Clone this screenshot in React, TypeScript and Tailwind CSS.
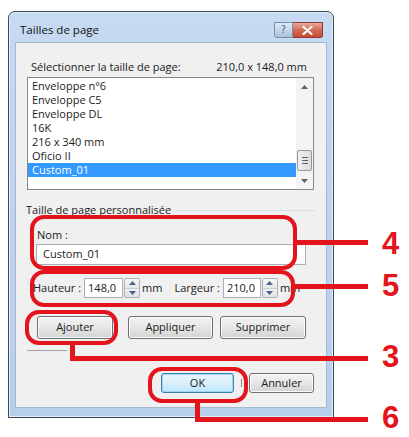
import React from "react";

function Spinner() {
  return (
    <div className="ml-[1px] flex h-[20px] w-[16px] flex-col overflow-hidden rounded-[2px] border border-[#a9b0b8] bg-[#eef0f2]">
      <div className="flex flex-1 items-center justify-center border-b border-[#c8cdd3] bg-gradient-to-b from-[#f7f8f9] to-[#e3e6ea]">
        <svg width="7" height="4" viewBox="0 0 7 4">
          <path d="M0 4 L3.5 0 L7 4Z" fill="#4e6285" />
        </svg>
      </div>
      <div className="flex flex-1 items-center justify-center bg-gradient-to-b from-[#f0f2f4] to-[#dde1e6]">
        <svg width="7" height="4" viewBox="0 0 7 4">
          <path d="M0 0 L3.5 4 L7 0Z" fill="#4e6285" />
        </svg>
      </div>
    </div>
  );
}

function WinButton({ label, w, isDefault }: { label: string; w: string; isDefault?: boolean }) {
  return (
    <div
      className={
        "flex items-center justify-center rounded-[3px] border " +
        (isDefault
          ? "border-[#3c7fb1] bg-gradient-to-b from-[#eaf6fd] via-[#d9f0fc] to-[#bee6fd] shadow-[inset_0_0_0_1px_#9ed8f6] "
          : "border-[#707070] bg-gradient-to-b from-[#f3f3f3] via-[#e6e6e6] to-[#d3d3d3] shadow-[inset_0_0_0_1px_#fcfcfc] ") +
        w
      }
    >
      <span>{label}</span>
    </div>
  );
}

const items = ["Enveloppe n°6", "Enveloppe C5", "Enveloppe DL", "16K", "216 x 340 mm", "Oficio II", "Custom_01"];

export default function App() {
  return (
    <div className="relative h-[437px] w-[409px] overflow-hidden bg-white font-['Open_Sans',sans-serif] text-[11px] text-[#1b1b1b]">
      {/* Window */}
      <div className="ml-[8px] mt-[11px] flex h-[407px] w-[326px] flex-col rounded-t-[7px] border border-[#39485a] bg-gradient-to-b from-[#c6daf1] via-[#bdd4ee] to-[#b6cfea] shadow-[inset_0_0_0_1px_#e2edf8]">
        {/* Title bar */}
        <div className="flex h-[30px] items-start">
          <div className="ml-[11px] mt-[11px] text-[11.5px] leading-[14px] text-[#111]">Tailles de page</div>
          <div className="ml-auto mr-[10px] mt-[10px] flex">
            <div className="flex h-[16px] w-[19px] items-center justify-center rounded-bl-[3px] border border-[#7b8ea8] bg-gradient-to-b from-[#dfe9f5] via-[#c5d6ea] to-[#a9c0db]">
              <span className="font-['DejaVu_Sans',sans-serif] text-[10px] leading-none text-[#5b6b80]">?</span>
            </div>
            <div className="flex h-[16px] w-[30px] items-center justify-center rounded-br-[3px] border border-l-0 border-[#8e3a2c] bg-gradient-to-b from-[#e9a99b] via-[#d26a53] to-[#c74a31]">
              <svg width="11" height="9" viewBox="0 0 11 9">
                <path d="M1.5 1 L9.5 8 M9.5 1 L1.5 8" stroke="#ffffff" strokeWidth="2.2" strokeLinecap="round" />
              </svg>
            </div>
          </div>
        </div>
        {/* Client area */}
        <div className="mx-[6px] flex h-[366px] flex-col border border-[#a3b8d1] bg-[#f0f0f0]">
          <div className="ml-[15px] mr-[19px] mt-[17px] flex h-[14px] items-center justify-between leading-[14px]">
            <span>Sélectionner la taille de page:</span>
            <span>210,0 x 148,0 mm</span>
          </div>
          {/* Listbox */}
          <div className="ml-[11px] mt-[3px] flex h-[113px] w-[287px] border border-[#828790] bg-white">
            <div className="flex flex-1 flex-col pt-[1px]">
              {items.map((it) => (
                <div
                  key={it}
                  className={
                    "flex h-[14px] items-center pl-[4px] leading-[14px] " +
                    (it === "Custom_01" ? "bg-[#3399ff] text-white" : "")
                  }
                >
                  {it}
                </div>
              ))}
            </div>
            <div className="flex w-[17px] flex-col items-center bg-[#f3f3f3]">
              <div className="mt-[7px] h-[5px]">
                <svg width="7" height="4" viewBox="0 0 7 4">
                  <path d="M0 4 L3.5 0 L7 4Z" fill="#606060" />
                </svg>
              </div>
              <div className="mt-[60px] flex h-[21px] w-[15px] items-center justify-center rounded-[2px] border border-[#979797] bg-gradient-to-r from-[#f0f0f0] to-[#dcdcdc]">
                <svg width="6" height="7" viewBox="0 0 6 7">
                  <path d="M0 0.5 H6 M0 3.5 H6 M0 6.5 H6" stroke="#606060" strokeWidth="1" />
                </svg>
              </div>
              <div className="mt-[8px]">
                <svg width="7" height="4" viewBox="0 0 7 4">
                  <path d="M0 0 L3.5 4 L7 0Z" fill="#606060" />
                </svg>
              </div>
            </div>
          </div>
          {/* Group */}
          <div className="ml-[10px] mr-[11px] mt-[13px] flex h-[14px] items-center leading-[14px]">
            <span>Taille de page personnalisée</span>
            <div className="ml-[6px] h-[1px] flex-1 bg-[#d5dfe5]" />
          </div>
          <div className="ml-[21px] mt-[11px] h-[14px] leading-[14px]">Nom :</div>
          <div className="ml-[20px] mt-[2px] flex h-[21px] w-[270px] items-center border border-[#abadb3] bg-white pl-[6px]">
            Custom_01
          </div>
          {/* Dimensions row */}
          <div className="ml-[17px] mt-[13px] flex h-[20px] items-center">
            <span>Hauteur :</span>
            <div className="ml-[3px] flex h-[20px] w-[39px] items-center border border-[#abadb3] bg-white pl-[3px]">148,0</div>
            <Spinner />
            <span className="ml-[2px]">mm</span>
            <span className="ml-[12px]">Largeur :</span>
            <div className="ml-[3px] flex h-[20px] w-[38px] items-center border border-[#abadb3] bg-white pl-[3px]">210,0</div>
            <Spinner />
            <span className="ml-[2px]">mm</span>
          </div>
          {/* Buttons */}
          <div className="ml-[21px] mt-[18px] flex h-[23px] gap-[15px]">
            <WinButton label="Ajouter" w="w-[76px]" />
            <div className="flex gap-[7px]">
              <WinButton label="Appliquer" w="w-[85px]" />
              <WinButton label="Supprimer" w="w-[86px]" />
            </div>
          </div>
          <div className="ml-[11px] mt-[11px] h-[1px] w-[40px] bg-[#a0a0a0]" />
          {/* OK / Cancel */}
          <div className="ml-[145px] mt-[22px] flex h-[20px] items-center">
            <WinButton label="OK" w="w-[73px] h-[20px]" isDefault />
            <div className="ml-[7px] h-[8px] w-[1px] bg-[#8a8a8a]" />
            <div className="ml-[7px] h-[20px]">
              <WinButton label="Annuler" w="w-[65px] h-[20px]" />
            </div>
          </div>
        </div>
      </div>

      {/* Annotations */}
      <div className="absolute left-[30px] top-[215px] h-[55px] w-[267px] rounded-[14px] border-[4px] border-[#e3141c]" />
      <div className="absolute left-[296px] top-[240px] h-[5px] w-[72px] bg-[#e3141c]" />
      <div className="absolute left-[382px] top-[226px] font-['Liberation_Sans',sans-serif] text-[31px] font-bold leading-[36px] text-[#e3141c]">4</div>

      <div className="absolute left-[30px] top-[270px] h-[37px] w-[265px] rounded-[14px] border-[4px] border-[#e3141c]" />
      <div className="absolute left-[294px] top-[284px] h-[5px] w-[74px] bg-[#e3141c]" />
      <div className="absolute left-[382px] top-[268px] font-['Liberation_Sans',sans-serif] text-[31px] font-bold leading-[36px] text-[#e3141c]">5</div>

      <div className="absolute left-[25px] top-[310px] h-[35px] w-[93px] rounded-[14px] border-[4px] border-[#e3141c]" />
      <div className="absolute left-[70px] top-[344px] h-[17px] w-[5px] bg-[#e3141c]" />
      <div className="absolute left-[70px] top-[356px] h-[5px] w-[298px] bg-[#e3141c]" />
      <div className="absolute left-[382px] top-[339px] font-['Liberation_Sans',sans-serif] text-[31px] font-bold leading-[36px] text-[#e3141c]">3</div>

      <div className="absolute left-[148px] top-[367px] h-[36px] w-[100px] rounded-[14px] border-[4px] border-[#e3141c]" />
      <div className="absolute left-[195px] top-[402px] h-[20px] w-[5px] bg-[#e3141c]" />
      <div className="absolute left-[195px] top-[417px] h-[5px] w-[173px] bg-[#e3141c]" />
      <div className="absolute left-[382px] top-[400px] font-['Liberation_Sans',sans-serif] text-[31px] font-bold leading-[36px] text-[#e3141c]">6</div>
    </div>
  );
}
